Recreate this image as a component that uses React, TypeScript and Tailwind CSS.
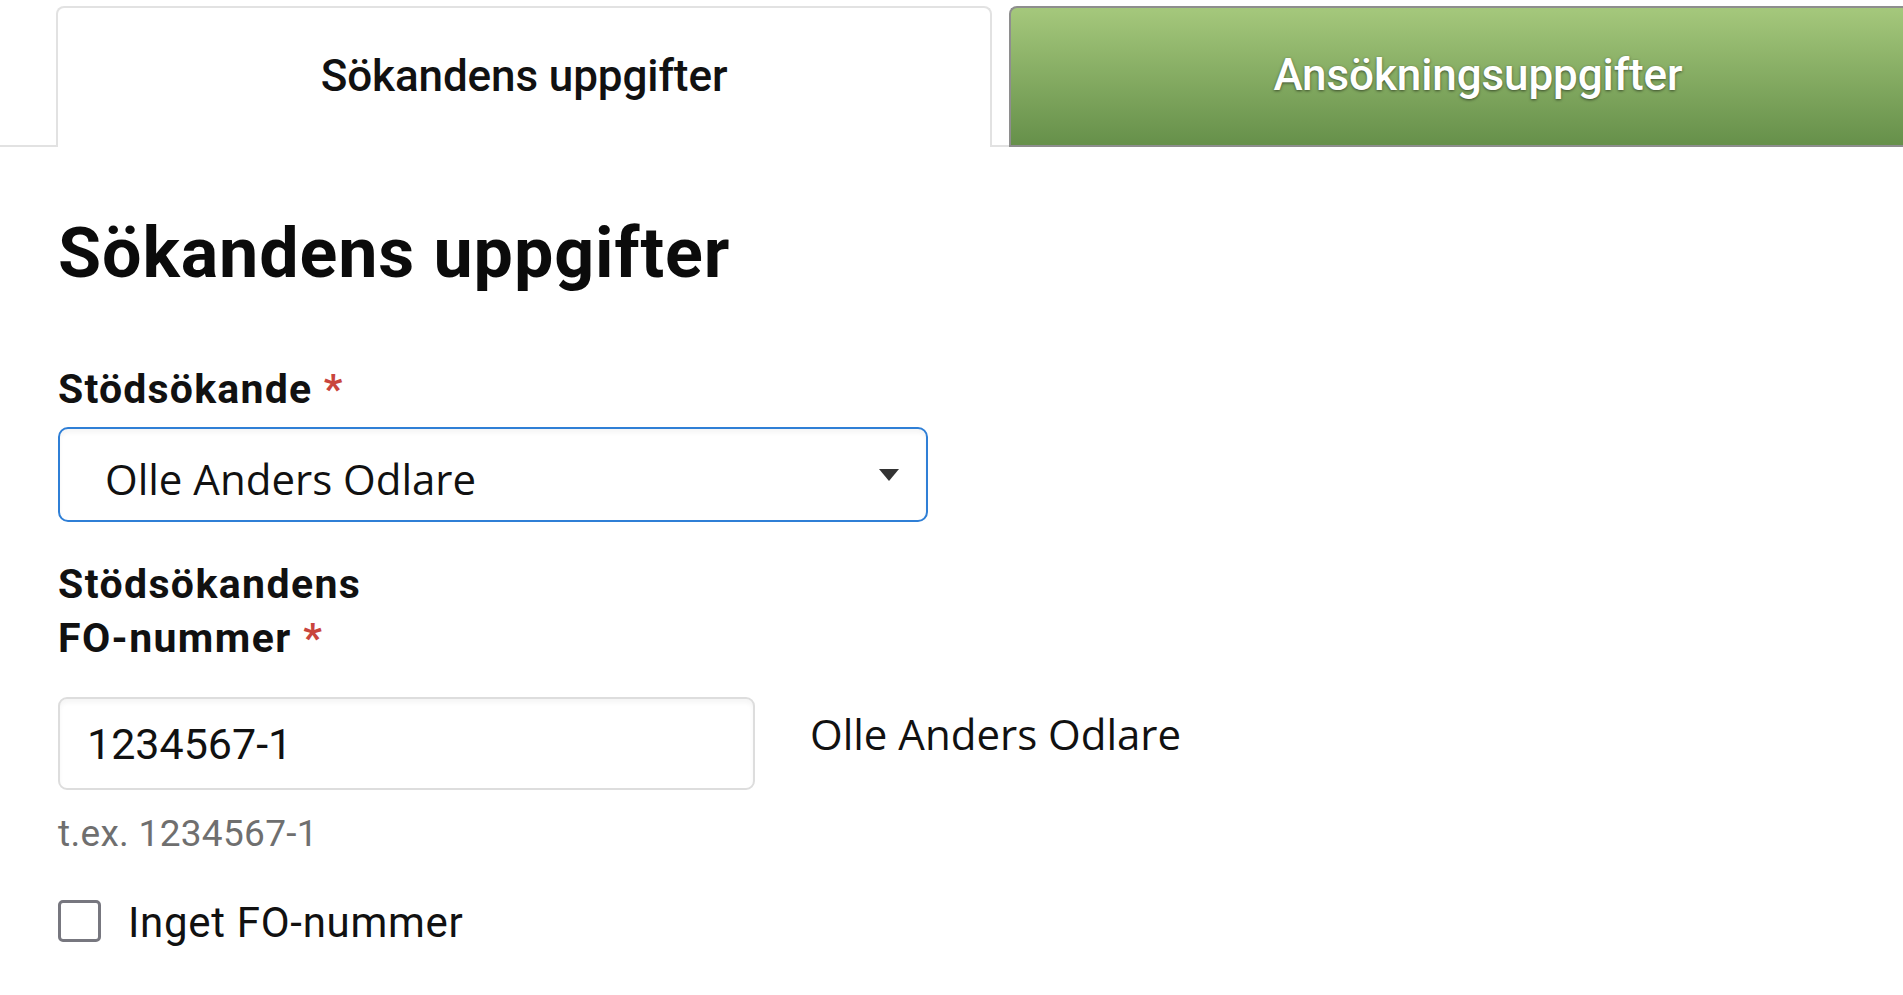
import React from "react";

export default function App() {
  return (
    <div className="w-full h-screen overflow-hidden bg-white text-[#111] font-['Roboto',_'Liberation_Sans',_sans-serif]">
      {/* Tabs */}
      <div className="flex pl-[56px] pt-[6px] border-b-2 border-[#e2e2e2] overflow-visible">
        <div className="w-[936px] shrink-0 h-[141px] -mb-[2px] bg-white border-2 border-b-0 border-[#e2e2e2] rounded-t-[8px] flex items-center justify-center pb-[4px]">
          <span className="text-[44px] font-medium leading-[52px] tracking-[-0.1px] text-[#111]">Sökandens uppgifter</span>
        </div>
        <div className="ml-[17px] w-[936px] shrink-0 h-[141px] -mb-[2px] border-2 border-r-0 border-[#8e8e8e] rounded-tl-[8px] bg-gradient-to-b from-[#a5c87c] to-[#66904a] flex items-center justify-center pb-[4px]">
          <span className="text-[44px] font-medium leading-[52px] tracking-[-0.1px] text-white [text-shadow:0_1px_3px_rgba(0,0,0,0.55)]">Ansökningsuppgifter</span>
        </div>
      </div>

      {/* Content */}
      <div className="pl-[58px]">
        <h1 className="mt-[66px] text-[70px] font-bold leading-[80px] tracking-[0.9px] text-[#0b0b0b]">Sökandens uppgifter</h1>

        <div className="mt-[69px] text-[41px] font-bold leading-[54px] tracking-[1.2px]">
          Stödsökande <span className="text-[#c9453d]">*</span>
        </div>

        <div className="mt-[11px] w-[870px] h-[95px] border-2 border-[#2f7fd6] rounded-[10px] bg-white shadow-[inset_0_4px_4px_rgba(0,0,0,0.04)] flex items-center justify-between pl-[45px] pr-[27px]">
          <span className="pt-[8px] font-['Open_Sans',_'Noto_Sans',_sans-serif] text-[42px] leading-[50px] text-[#111]">Olle Anders Odlare</span>
          <span className="w-0 h-0 border-l-[10px] border-r-[10px] border-t-[12px] border-l-transparent border-r-transparent border-t-[#333]" />
        </div>

        <div className="mt-[35px] text-[41px] font-bold leading-[54px] tracking-[1.4px]">
          Stödsökandens
          <br />
          FO-nummer <span className="text-[#c9453d]">*</span>
        </div>

        <div className="mt-[32px] flex items-start">
          <div className="w-[697px] h-[93px] border-2 border-[#dddddd] rounded-[9px] bg-white shadow-[inset_0_4px_4px_rgba(0,0,0,0.04)] flex items-center pl-[27px]">
            <span className="text-[43px] leading-[50px] text-[#111]">1234567-1</span>
          </div>
          <div className="ml-[55px] mt-[12px] font-['Open_Sans',_'Noto_Sans',_sans-serif] text-[42px] leading-[50px] text-[#111]">
            Olle Anders Odlare
          </div>
        </div>

        <div className="mt-[22px] text-[37px] leading-[44px] tracking-[0.3px] text-[#6f6f6f]">t.ex. 1234567-1</div>

        <label className="mt-[42px] flex items-start">
          <span className="mt-[2px] w-[43px] h-[42px] border-[3px] border-[#77777f] rounded-[5px] bg-white shrink-0" />
          <span className="ml-[27px] text-[42px] leading-[50px] tracking-[0.7px] text-[#111]">Inget FO-nummer</span>
        </label>
      </div>
    </div>
  );
}
